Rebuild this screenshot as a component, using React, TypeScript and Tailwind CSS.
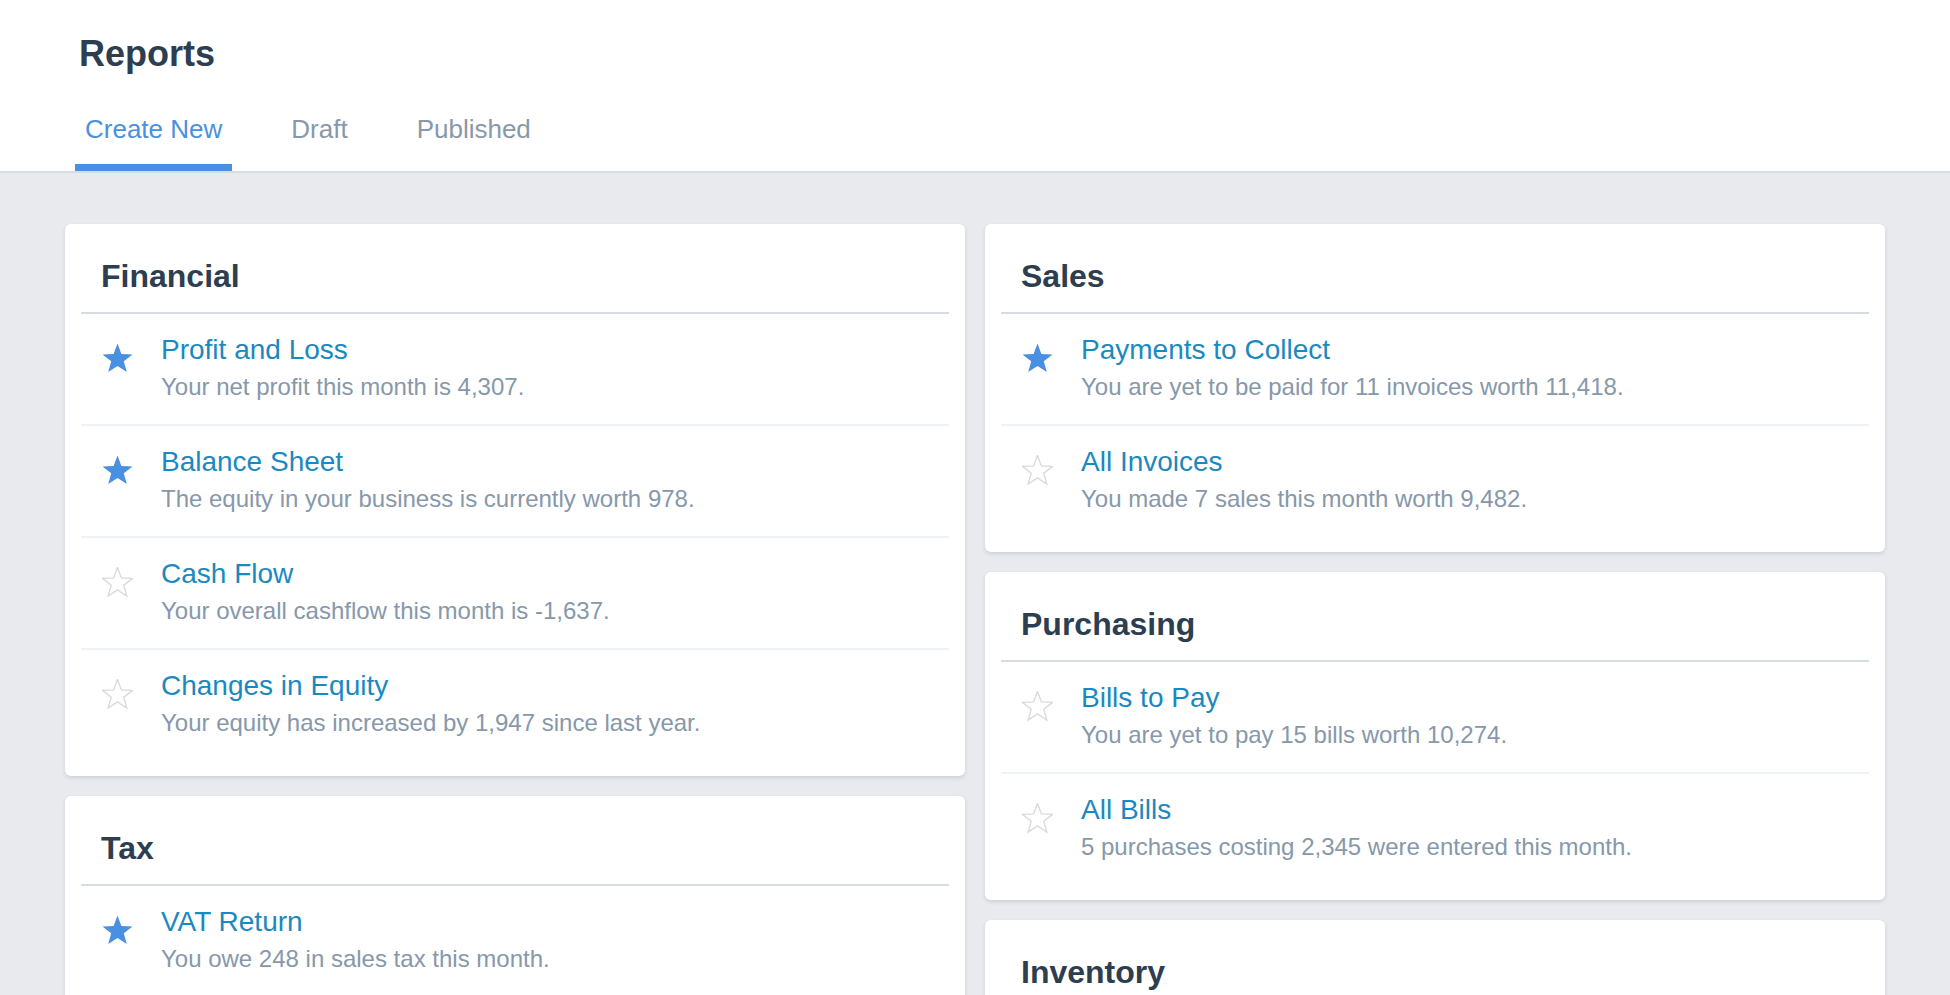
import React from 'react';

type Report = {
  title: string;
  detail: string;
  starred: boolean;
};

type Section = {
  name: string;
  reports: Report[];
};

const leftColumn: Section[] = [
  {
    name: 'Financial',
    reports: [
      { title: 'Profit and Loss', detail: 'Your net profit this month is 4,307.', starred: true },
      { title: 'Balance Sheet', detail: 'The equity in your business is currently worth 978.', starred: true },
      { title: 'Cash Flow', detail: 'Your overall cashflow this month is -1,637.', starred: false },
      { title: 'Changes in Equity', detail: 'Your equity has increased by 1,947 since last year.', starred: false },
    ],
  },
  {
    name: 'Tax',
    reports: [
      { title: 'VAT Return', detail: 'You owe 248 in sales tax this month.', starred: true },
    ],
  },
];

const rightColumn: Section[] = [
  {
    name: 'Sales',
    reports: [
      { title: 'Payments to Collect', detail: 'You are yet to be paid for 11 invoices worth 11,418.', starred: true },
      { title: 'All Invoices', detail: 'You made 7 sales this month worth 9,482.', starred: false },
    ],
  },
  {
    name: 'Purchasing',
    reports: [
      { title: 'Bills to Pay', detail: 'You are yet to pay 15 bills worth 10,274.', starred: false },
      { title: 'All Bills', detail: '5 purchases costing 2,345 were entered this month.', starred: false },
    ],
  },
  {
    name: 'Inventory',
    reports: [],
  },
];

const tabs = ['Create New', 'Draft', 'Published'];

// 5-point star, outer radius 10, inner 4.2
const STAR_POINTS =
  '0,-10 2.469,-3.398 9.511,-3.09 3.994,1.298 5.878,8.09 0,4.2 -5.878,8.09 -3.994,1.298 -9.511,-3.09 -2.469,-3.398';

function Star({ filled }: { filled: boolean }) {
  return (
    <svg width="31" height="30" viewBox="-9.8 -10.3 19.6 19" className="block">
      {filled ? (
        <polygon points={STAR_POINTS} fill="#4a90e2" />
      ) : (
        <polygon points={STAR_POINTS} fill="none" stroke="#d9dadc" strokeWidth="0.9" strokeLinejoin="miter" />
      )}
    </svg>
  );
}

function ReportCard({ section }: { section: Section }) {
  return (
    <div className="bg-white rounded-[6px] px-[16px] pb-[16px] shadow-[0_2px_4px_rgba(40,60,80,0.14)]">
      <h2 className="pt-[32px] pb-[16px] pl-[20px] text-[32px] leading-[40px] font-bold text-[#2c3e50] border-b-2 border-[#d5dce3]">
        {section.name}
      </h2>
      {section.reports.map((r, i) => (
        <div
          key={r.title}
          className={`flex items-start pl-[21px] pt-[17px] pb-[19px] ${
            i < section.reports.length - 1 ? 'border-b-2 border-[#eef2f5]' : ''
          }`}
        >
          <div className="w-[31px] mt-[12px] shrink-0">
            <Star filled={r.starred} />
          </div>
          <div className="ml-[28px] flex flex-col">
            <a className="text-[28px] leading-[38px] text-[#1a89c0] cursor-pointer">{r.title}</a>
            <p className="text-[24px] leading-[36px] text-[#8698aa]">{r.detail}</p>
          </div>
        </div>
      ))}
    </div>
  );
}

export default function App() {
  return (
    <div className="min-h-screen bg-[#e8eaee] font-['Liberation_Sans',Arial,sans-serif]">
      {/* Header */}
      <div className="bg-white border-b-2 border-[#d5dce3] px-[75px] pt-[32px]">
        <h1 className="pl-[4px] text-[36px] leading-[44px] font-bold text-[#2c3e50]">Reports</h1>
        <div className="mt-[36px] flex gap-[49px]">
          {tabs.map((t, i) => (
            <button
              key={t}
              className={`px-[10px] pb-[18px] text-[26px] leading-[34px] border-b-[7px] ${
                i === 0 ? 'text-[#4a90e2] border-[#4a90e2]' : 'text-[#8798aa] border-transparent'
              }`}
            >
              {t}
            </button>
          ))}
        </div>
      </div>

      {/* Cards */}
      <div className="grid grid-cols-2 gap-x-[20px] px-[65px] pt-[51px] pb-[40px] items-start">
        <div className="flex flex-col gap-[20px]">
          {leftColumn.map(s => (
            <ReportCard key={s.name} section={s} />
          ))}
        </div>
        <div className="flex flex-col gap-[20px]">
          {rightColumn.map(s => (
            <ReportCard key={s.name} section={s} />
          ))}
        </div>
      </div>
    </div>
  );
}
